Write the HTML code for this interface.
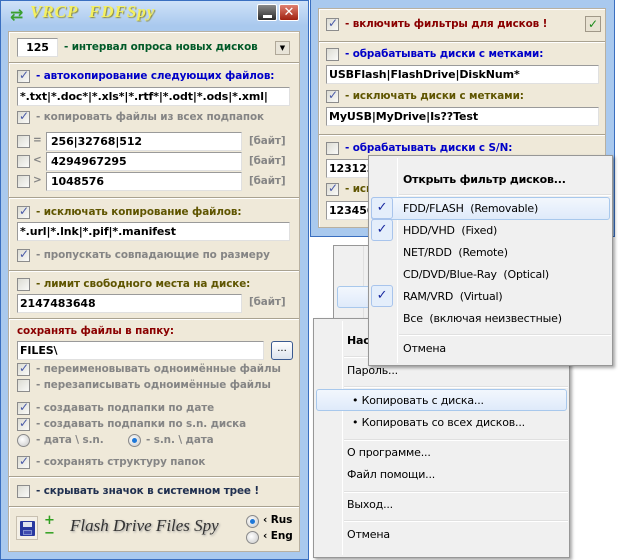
<!DOCTYPE html>
<html><head><meta charset="utf-8"><style>
*{margin:0;padding:0;box-sizing:border-box}
body{width:618px;height:560px;background:#fff;position:relative;overflow:hidden;font-family:Tahoma,"DejaVu Sans","Liberation Sans",sans-serif;font-size:11px}
.a{position:absolute}
.win{background:#a9c9ee;border:1px solid #3a6fc0}
.pan{background:#efe9d9;border:1px solid #b8b0a0;box-shadow:inset 1px 1px 0 #fff}
.sep{position:absolute;height:2px;border-top:1px solid #a9a290;border-bottom:1px solid #fff}
.t{position:absolute;font-weight:bold;white-space:nowrap;font-size:10.4px;letter-spacing:-0.1px}
.cb{position:absolute;width:13px;height:13px;border:1px solid #8c8c8c;background:linear-gradient(135deg,#dcdcd4,#fafaf8)}
.cb.k::after{content:"✓";position:absolute;left:1px;top:-3px;font-size:12px;color:#4a5aa8;font-weight:bold}
.in{position:absolute;height:19px;background:#fff;border:1px solid #9a9a9a;border-right-color:#e0e0e0;border-bottom-color:#e0e0e0;font-weight:bold;font-size:11px;padding:2px 0 0 4px;white-space:nowrap;overflow:hidden;color:#000;letter-spacing:-0.1px}
.g{color:#858585}.bl{color:#0000c8}.ol{color:#5f5500}.dr{color:#8a0000}.gr{color:#005a28}.dk{color:#203050}
.rd{position:absolute;width:13px;height:13px;border-radius:50%;border:1px solid #8a8a8a;background:radial-gradient(circle at 40% 40%,#fff,#c8c8c8)}
.rd.on::after{content:"";position:absolute;left:3px;top:3px;width:5px;height:5px;border-radius:50%;background:#1e78d8}
.menu{position:absolute;background:#f0f0f0;border:1px solid #979797;box-shadow:2px 2px 3px rgba(0,0,0,.35);font-family:"Segoe UI","DejaVu Sans","Liberation Sans",sans-serif;font-size:11px;letter-spacing:-0.2px}
.mi{position:absolute;white-space:nowrap;color:#000}
.ms{position:absolute;height:2px;border-top:1px solid #e0e0e0;border-bottom:1px solid #fff}
.hl{position:absolute;border:1px solid #a8c8ec;border-radius:3px;background:linear-gradient(#f2f7fd,#dfeafa)}
.ck{position:absolute;width:22px;height:22px;border:1px solid #a8c4ec;border-radius:3px;background:#e4eefb;color:#1a2aa0;text-align:center;line-height:20px;font-size:13px}
</style></head><body>

<!-- LEFT WINDOW -->
<div class="a win" style="left:0;top:0;width:309px;height:560px;background:linear-gradient(#cfe2f8 0,#a9c9ee 25px,#a9c9ee 100%)"></div>
<div class="a" style="left:10px;top:5px;font-size:16px;color:#3aa030;font-weight:bold">⇄</div>
<div class="a" style="left:30px;top:2px;font-family:'Liberation Serif',serif;font-style:italic;font-weight:bold;font-size:17px;color:#f4f060;text-shadow:1px 1px 1px #8a8a40;letter-spacing:1px">VRCP&nbsp; FDFSpy</div>
<div class="a" style="left:257px;top:4px;width:20px;height:17px;background:linear-gradient(#8a8a8a,#2a2a2a);border:1px solid #fff;border-radius:2px"><div class="a" style="left:5px;top:10px;width:9px;height:3px;background:#fff"></div></div>
<div class="a" style="left:279px;top:4px;width:20px;height:17px;background:linear-gradient(#e08070,#a02010);border:1px solid #fff;border-radius:2px;color:#fff;font-weight:bold;font-size:13px;text-align:center;line-height:15px">✕</div>
<div class="a pan" style="left:8px;top:31px;width:292px;height:521px"></div>

<div class="in" style="left:17px;top:38px;width:41px;text-align:center;padding-left:0">125</div>
<div class="t gr" style="left:64px;top:41px">- интервал опроса новых дисков</div>
<div class="a" style="left:275px;top:41px;width:15px;height:14px;background:#e8e4d8;border:1px solid #b0a898;font-size:7px;text-align:center;line-height:12px">▼</div>
<div class="sep" style="left:9px;top:62px;width:290px"></div>

<div class="cb k" style="left:17px;top:70px"></div><div class="t bl" style="left:36px;top:70px">- автокопирование следующих файлов:</div>
<div class="in" style="left:17px;top:87px;width:273px;padding-left:2px">*.txt|*.doc*|*.xls*|*.rtf*|*.odt|*.ods|*.xml|</div>
<div class="cb k" style="left:17px;top:111px"></div><div class="t g" style="left:36px;top:111px">- копировать файлы из всех подпапок</div>
<div class="cb" style="left:17px;top:135px"></div><div class="t g" style="left:33px;top:134px">=</div><div class="in" style="left:46px;top:132px;width:196px">256|32768|512</div><div class="t g" style="left:249px;top:135px">[байт]</div>
<div class="cb" style="left:17px;top:155px"></div><div class="t g" style="left:33px;top:154px">&lt;</div><div class="in" style="left:46px;top:152px;width:196px">4294967295</div><div class="t g" style="left:249px;top:155px">[байт]</div>
<div class="cb" style="left:17px;top:175px"></div><div class="t g" style="left:33px;top:174px">&gt;</div><div class="in" style="left:46px;top:172px;width:196px">1048576</div><div class="t g" style="left:249px;top:175px">[байт]</div>
<div class="sep" style="left:9px;top:197px;width:290px"></div>

<div class="cb k" style="left:17px;top:206px"></div><div class="t ol" style="left:36px;top:206px">- исключать копирование файлов:</div>
<div class="in" style="left:17px;top:222px;width:273px;padding-left:2px">*.url|*.lnk|*.pif|*.manifest</div>
<div class="cb k" style="left:17px;top:249px"></div><div class="t g" style="left:36px;top:249px">- пропускать совпадающие по размеру</div>
<div class="sep" style="left:9px;top:270px;width:290px"></div>

<div class="cb" style="left:17px;top:278px"></div><div class="t ol" style="left:36px;top:278px">- лимит свободного места на диске:</div>
<div class="in" style="left:17px;top:294px;width:225px;padding-left:2px">2147483648</div><div class="t g" style="left:249px;top:296px">[байт]</div>
<div class="sep" style="left:9px;top:318px;width:290px"></div>

<div class="t dr" style="left:17px;top:325px">сохранять файлы в папку:</div>
<div class="in" style="left:17px;top:341px;width:247px;padding-left:2px">FILES\</div>
<div class="a" style="left:271px;top:341px;width:22px;height:19px;border:1px solid #3a5a90;border-radius:3px;background:linear-gradient(#fff,#dde4ee);text-align:center;font-size:10px;line-height:14px">...</div>
<div class="cb k" style="left:17px;top:363px"></div><div class="t g" style="left:36px;top:363px">- переименовывать одноимённые файлы</div>
<div class="cb" style="left:17px;top:379px"></div><div class="t g" style="left:36px;top:379px">- перезаписывать одноимённые файлы</div>
<div class="cb k" style="left:17px;top:402px"></div><div class="t g" style="left:36px;top:402px">- создавать подпапки по дате</div>
<div class="cb k" style="left:17px;top:418px"></div><div class="t g" style="left:36px;top:418px">- создавать подпапки по s.n. диска</div>
<div class="rd" style="left:17px;top:434px"></div><div class="t g" style="left:36px;top:434px">- дата \ s.n.</div>
<div class="rd on" style="left:128px;top:434px"></div><div class="t g" style="left:146px;top:434px">- s.n. \ дата</div>
<div class="cb k" style="left:17px;top:456px"></div><div class="t g" style="left:36px;top:456px">- сохранять структуру папок</div>
<div class="sep" style="left:9px;top:476px;width:290px"></div>
<div class="cb" style="left:17px;top:485px"></div><div class="t dk" style="left:36px;top:485px">- скрывать значок в системном трее !</div>
<div class="sep" style="left:9px;top:506px;width:290px"></div>

<div class="a" style="left:16px;top:516px;width:22px;height:24px;border:1px solid #c8c0b0;background:#f4f0e6"><div class="a" style="left:3px;top:4px;width:15px;height:15px;background:#2838a0;border-radius:1px"><div class="a" style="left:3px;top:1px;width:9px;height:5px;background:#e0e4f0"></div><div class="a" style="left:3px;top:9px;width:9px;height:5px;background:#404cb0;border:1px solid #8090d0"></div></div></div>
<div class="a" style="left:44px;top:514px;color:#30a020;font-weight:bold;font-size:13px;line-height:13px">+<br>−</div>
<div class="a" style="left:70px;top:516px;font-family:'Liberation Serif',serif;font-style:italic;font-size:17px;color:#333;text-shadow:1px 1px 2px #999">Flash Drive Files Spy</div>
<div class="rd on" style="left:246px;top:515px"></div><div class="t" style="left:263px;top:514px;font-size:10.5px">‹ Rus</div>
<div class="rd" style="left:246px;top:531px"></div><div class="t" style="left:263px;top:530px;font-size:10.5px">‹ Eng</div>

<!-- RIGHT WINDOW -->
<div class="a win" style="left:310px;top:-2px;width:305px;height:239px"></div>
<div class="a pan" style="left:318px;top:8px;width:288px;height:220px"></div>
<div class="cb k" style="left:326px;top:18px"></div><div class="t dr" style="left:345px;top:18px">- включить фильтры для дисков !</div>
<div class="a" style="left:585px;top:16px;width:16px;height:16px;border:1px solid #a09888;background:#e8e2d2;color:#1a8a1a;font-weight:bold;text-align:center;line-height:14px;font-size:12px">✓</div>
<div class="sep" style="left:319px;top:41px;width:286px"></div>
<div class="cb" style="left:326px;top:48px"></div><div class="t bl" style="left:345px;top:48px">- обрабатывать диски с метками:</div>
<div class="in" style="left:326px;top:65px;width:273px;padding-left:2px">USBFlash|FlashDrive|DiskNum*</div>
<div class="cb k" style="left:326px;top:90px"></div><div class="t ol" style="left:345px;top:90px">- исключать диски с метками:</div>
<div class="in" style="left:326px;top:107px;width:273px;padding-left:2px">MyUSB|MyDrive|Is??Test</div>
<div class="sep" style="left:319px;top:134px;width:286px"></div>
<div class="cb" style="left:326px;top:142px"></div><div class="t bl" style="left:345px;top:142px">- обрабатывать диски с S/N:</div>
<div class="in" style="left:326px;top:159px;width:273px;padding-left:2px">12312345</div>
<div class="cb k" style="left:326px;top:183px"></div><div class="t ol" style="left:345px;top:183px">- исключать</div>
<div class="in" style="left:326px;top:201px;width:273px;padding-left:2px">12345678</div>

<!-- back menu -->
<div class="menu" style="left:333px;top:245px;width:200px;height:80px;box-shadow:none"></div>
<div class="a" style="left:363px;top:246px;width:1px;height:72px;background:#e0e0e0"></div>
<div class="hl" style="left:337px;top:286px;width:100px;height:22px"></div>

<!-- main context menu -->
<div class="menu" style="left:313px;top:318px;width:257px;height:240px">
<div class="a" style="left:28px;top:2px;width:1px;height:234px;background:#e2e2e2;border-right:1px solid #fff"></div>
<div class="mi" style="left:33px;top:15px;font-weight:bold">Настройки...</div>
<div class="ms" style="left:30px;top:37px;width:224px"></div>
<div class="mi" style="left:33px;top:45px">Пароль...</div>
<div class="ms" style="left:30px;top:67px;width:224px"></div>
<div class="hl" style="left:2px;top:70px;width:251px;height:22px"></div>
<div class="mi" style="left:38px;top:75px">• Копировать с диска...</div>
<div class="mi" style="left:38px;top:97px">• Копировать со всех дисков...</div>
<div class="ms" style="left:30px;top:120px;width:224px"></div>
<div class="mi" style="left:33px;top:127px">О программе...</div>
<div class="mi" style="left:33px;top:149px">Файл помощи...</div>
<div class="ms" style="left:30px;top:172px;width:224px"></div>
<div class="mi" style="left:33px;top:179px">Выход...</div>
<div class="ms" style="left:30px;top:201px;width:224px"></div>
<div class="mi" style="left:33px;top:209px">Отмена</div>
</div>

<!-- submenu -->
<div class="menu" style="left:368px;top:155px;width:245px;height:211px">
<div class="a" style="left:28px;top:2px;width:1px;height:205px;background:#e2e2e2;border-right:1px solid #fff"></div>
<div class="mi" style="left:34px;top:17px;font-weight:bold">Открыть фильтр дисков...</div>
<div class="ms" style="left:30px;top:38px;width:212px"></div>
<div class="hl" style="left:2px;top:41px;width:239px;height:23px"></div>
<div class="ck" style="left:2px;top:41px">✓</div><div class="mi" style="left:34px;top:46px">FDD/FLASH&nbsp; (Removable)</div>
<div class="ck" style="left:2px;top:63px">✓</div><div class="mi" style="left:34px;top:68px">HDD/VHD&nbsp; (Fixed)</div>
<div class="mi" style="left:34px;top:90px">NET/RDD&nbsp; (Remote)</div>
<div class="mi" style="left:34px;top:112px">CD/DVD/Blue-Ray&nbsp; (Optical)</div>
<div class="ck" style="left:2px;top:129px">✓</div><div class="mi" style="left:34px;top:134px">RAM/VRD&nbsp; (Virtual)</div>
<div class="mi" style="left:34px;top:156px">Все&nbsp; (включая неизвестные)</div>
<div class="ms" style="left:30px;top:178px;width:212px"></div>
<div class="mi" style="left:34px;top:186px">Отмена</div>
</div>
</body></html>
